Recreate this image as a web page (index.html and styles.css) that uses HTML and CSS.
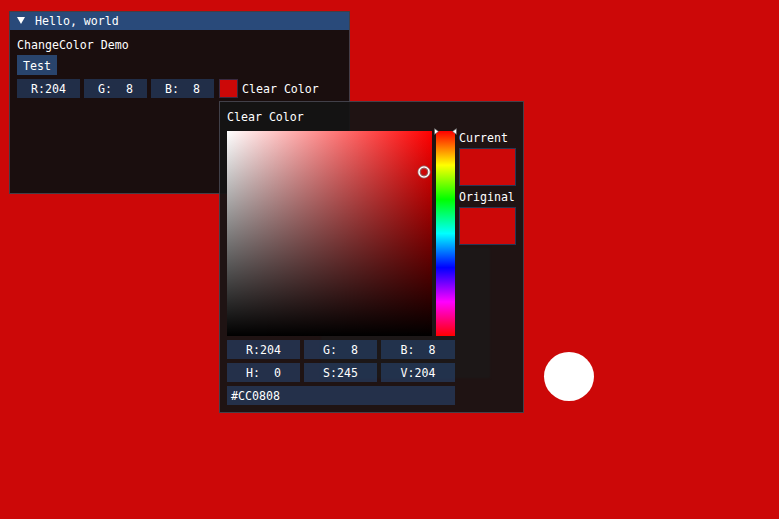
FILE: index.html
```html
<!DOCTYPE html>
<html>
<head>
<meta charset="utf-8">
<link rel="stylesheet" href="styles.css">
</head>
<body>
<div class="desk">
  <div class="win">
    <div class="titlebar">
      <svg class="collapse" width="8" height="7" viewBox="0 0 8 7"><polygon points="0,0 8,0 4,7" fill="#fff"/></svg>
      <span class="title">Hello, world</span>
    </div>
    <div class="win-body">
      <div class="text">ChangeColor Demo</div>
      <div class="btn">Test</div>
      <div class="row">
        <div class="drag w63">R:204</div>
        <div class="drag w63">G:  8</div>
        <div class="drag w63">B:  8</div>
        <div class="swatch-small"></div>
        <div class="label">Clear Color</div>
      </div>
    </div>
  </div>

  <div class="popup">
    <div class="ghost"></div>
    <div class="popup-body">
      <div class="text">Clear Color</div>
      <div class="picker">
        <div class="sv">
          <svg class="sv-cursor" width="16" height="16" viewBox="0 0 16 16">
            <circle cx="8" cy="8" r="6" fill="none" stroke="#808080" stroke-width="1"/>
            <circle cx="8" cy="8" r="5" fill="none" stroke="#ffffff" stroke-width="1.6"/>
            <circle cx="8" cy="8" r="3.8" fill="none" stroke="#808080" stroke-width="0.8"/>
          </svg>
        </div>
        <div class="hue">
          <svg class="hue-arrows" width="23" height="7" viewBox="0 0 23 7">
            <polygon points="0.5,0.5 4.5,3.5 0.5,6.5" fill="#fff" stroke="#555" stroke-width="0.6"/>
            <polygon points="22.5,0.5 18.5,3.5 22.5,6.5" fill="#fff" stroke="#555" stroke-width="0.6"/>
          </svg>
        </div>
        <div class="side">
          <div class="text">Current</div>
          <div class="swatch-big"></div>
          <div class="text">Original</div>
          <div class="swatch-big"></div>
        </div>
      </div>
      <div class="row3">
        <div class="drag w73">R:204</div>
        <div class="drag w73">G:  8</div>
        <div class="drag w74">B:  8</div>
      </div>
      <div class="row3">
        <div class="drag w73">H:  0</div>
        <div class="drag w73">S:245</div>
        <div class="drag w74">V:204</div>
      </div>
      <div class="hex">#CC0808</div>
    </div>
  </div>

  <div class="dot"></div>
</div>
</body>
</html>
```

FILE: styles.css
```css
html, body {
  margin: 0;
  padding: 0;
}
body {
  background: #cc0808;
  font-family: "DejaVu Sans Mono", "Liberation Mono", monospace;
  font-size: 11.6px;
  line-height: 13px;
  color: #ffffff;
}
.desk {
  position: relative;
  width: 779px;
  height: 519px;
  overflow: hidden;
}
.text {
  height: 13px;
  box-sizing: border-box;
  padding-top: 1px;
  white-space: pre;
}

/* main window */
.win {
  position: absolute;
  left: 9px;
  top: 11px;
  width: 341px;
  height: 183px;
  box-sizing: border-box;
  border: 1px solid rgba(110, 110, 128, 0.5);
  background: rgba(15, 15, 15, 0.94);
}
.titlebar {
  height: 18px;
  background: #294a7a;
  display: flex;
  align-items: center;
  padding-left: 7px;
}
.collapse {
  display: block;
  margin-top: -1px;
}
.title {
  margin-left: 10px;
  white-space: pre;
  margin-top: 0px;
}
.win-body {
  padding: 8px 7px 0 7px;
  display: flex;
  flex-direction: column;
}
.btn {
  margin-top: 4px;
  width: 40px;
  height: 20px;
  box-sizing: border-box;
  padding-top: 5px;
  text-align: center;
  background: rgba(66, 150, 250, 0.4);
}
.row {
  margin-top: 4px;
  display: flex;
  gap: 4px;
  height: 19px;
}
.drag {
  height: 19px;
  box-sizing: border-box;
  padding-top: 4px;
  text-align: center;
  white-space: pre;
  background: rgba(41, 74, 122, 0.54);
}
.w63 { width: 63px; }
.w73 { width: 73px; }
.w74 { width: 74px; }
.swatch-small {
  width: 19px;
  height: 19px;
  box-sizing: border-box;
  margin-left: 1px;
  background: #cc0808;
  border: 1px solid #3a2a40;
}
.label {
  padding-top: 4px;
  white-space: pre;
}

/* popup */
.popup {
  position: absolute;
  left: 219px;
  top: 101px;
  width: 305px;
  height: 312px;
  box-sizing: border-box;
  border: 1px solid rgba(110, 110, 128, 0.5);
  background: rgba(20, 20, 20, 0.94);
}
.ghost {
  position: absolute;
  left: 101px;
  top: 146px;
  width: 169px;
  height: 130px;
  background: rgba(26, 28, 28, 0.55);
  filter: blur(1px);
}
.popup-body {
  position: relative;
  padding: 8px 7px 0 7px;
  display: flex;
  flex-direction: column;
}
.picker {
  margin-top: 8px;
  display: flex;
  gap: 4px;
  height: 205px;
}
.sv {
  position: relative;
  width: 205px;
  height: 205px;
  background:
    linear-gradient(to top, #000000, rgba(0, 0, 0, 0)),
    linear-gradient(to right, #ffffff, #ff0000);
}
.sv-cursor {
  position: absolute;
  left: 189px;
  top: 33px;
}
.hue {
  position: relative;
  width: 19px;
  height: 205px;
  background: linear-gradient(to bottom, #ff0000 0%, #ffff00 16.67%, #00ff00 33.33%, #00ffff 50%, #0000ff 66.67%, #ff00ff 83.33%, #ff0000 100%);
}
.hue-arrows {
  position: absolute;
  left: -2px;
  top: -3px;
}
.side {
  width: 57px;
  display: flex;
  flex-direction: column;
  gap: 4px;
}
.swatch-big {
  width: 57px;
  height: 38px;
  box-sizing: border-box;
  background: #cc0808;
  border: 1px solid #2b3553;
}
.row3 {
  margin-top: 4px;
  display: flex;
  gap: 4px;
  height: 19px;
}
.hex {
  margin-top: 4px;
  width: 228px;
  height: 19px;
  box-sizing: border-box;
  padding: 4px 0 0 4px;
  white-space: pre;
  background: rgba(41, 74, 122, 0.54);
}

/* white dot */
.dot {
  position: absolute;
  left: 544px;
  top: 352px;
  width: 50px;
  height: 49px;
  border-radius: 50%;
  background: #ffffff;
}
```
